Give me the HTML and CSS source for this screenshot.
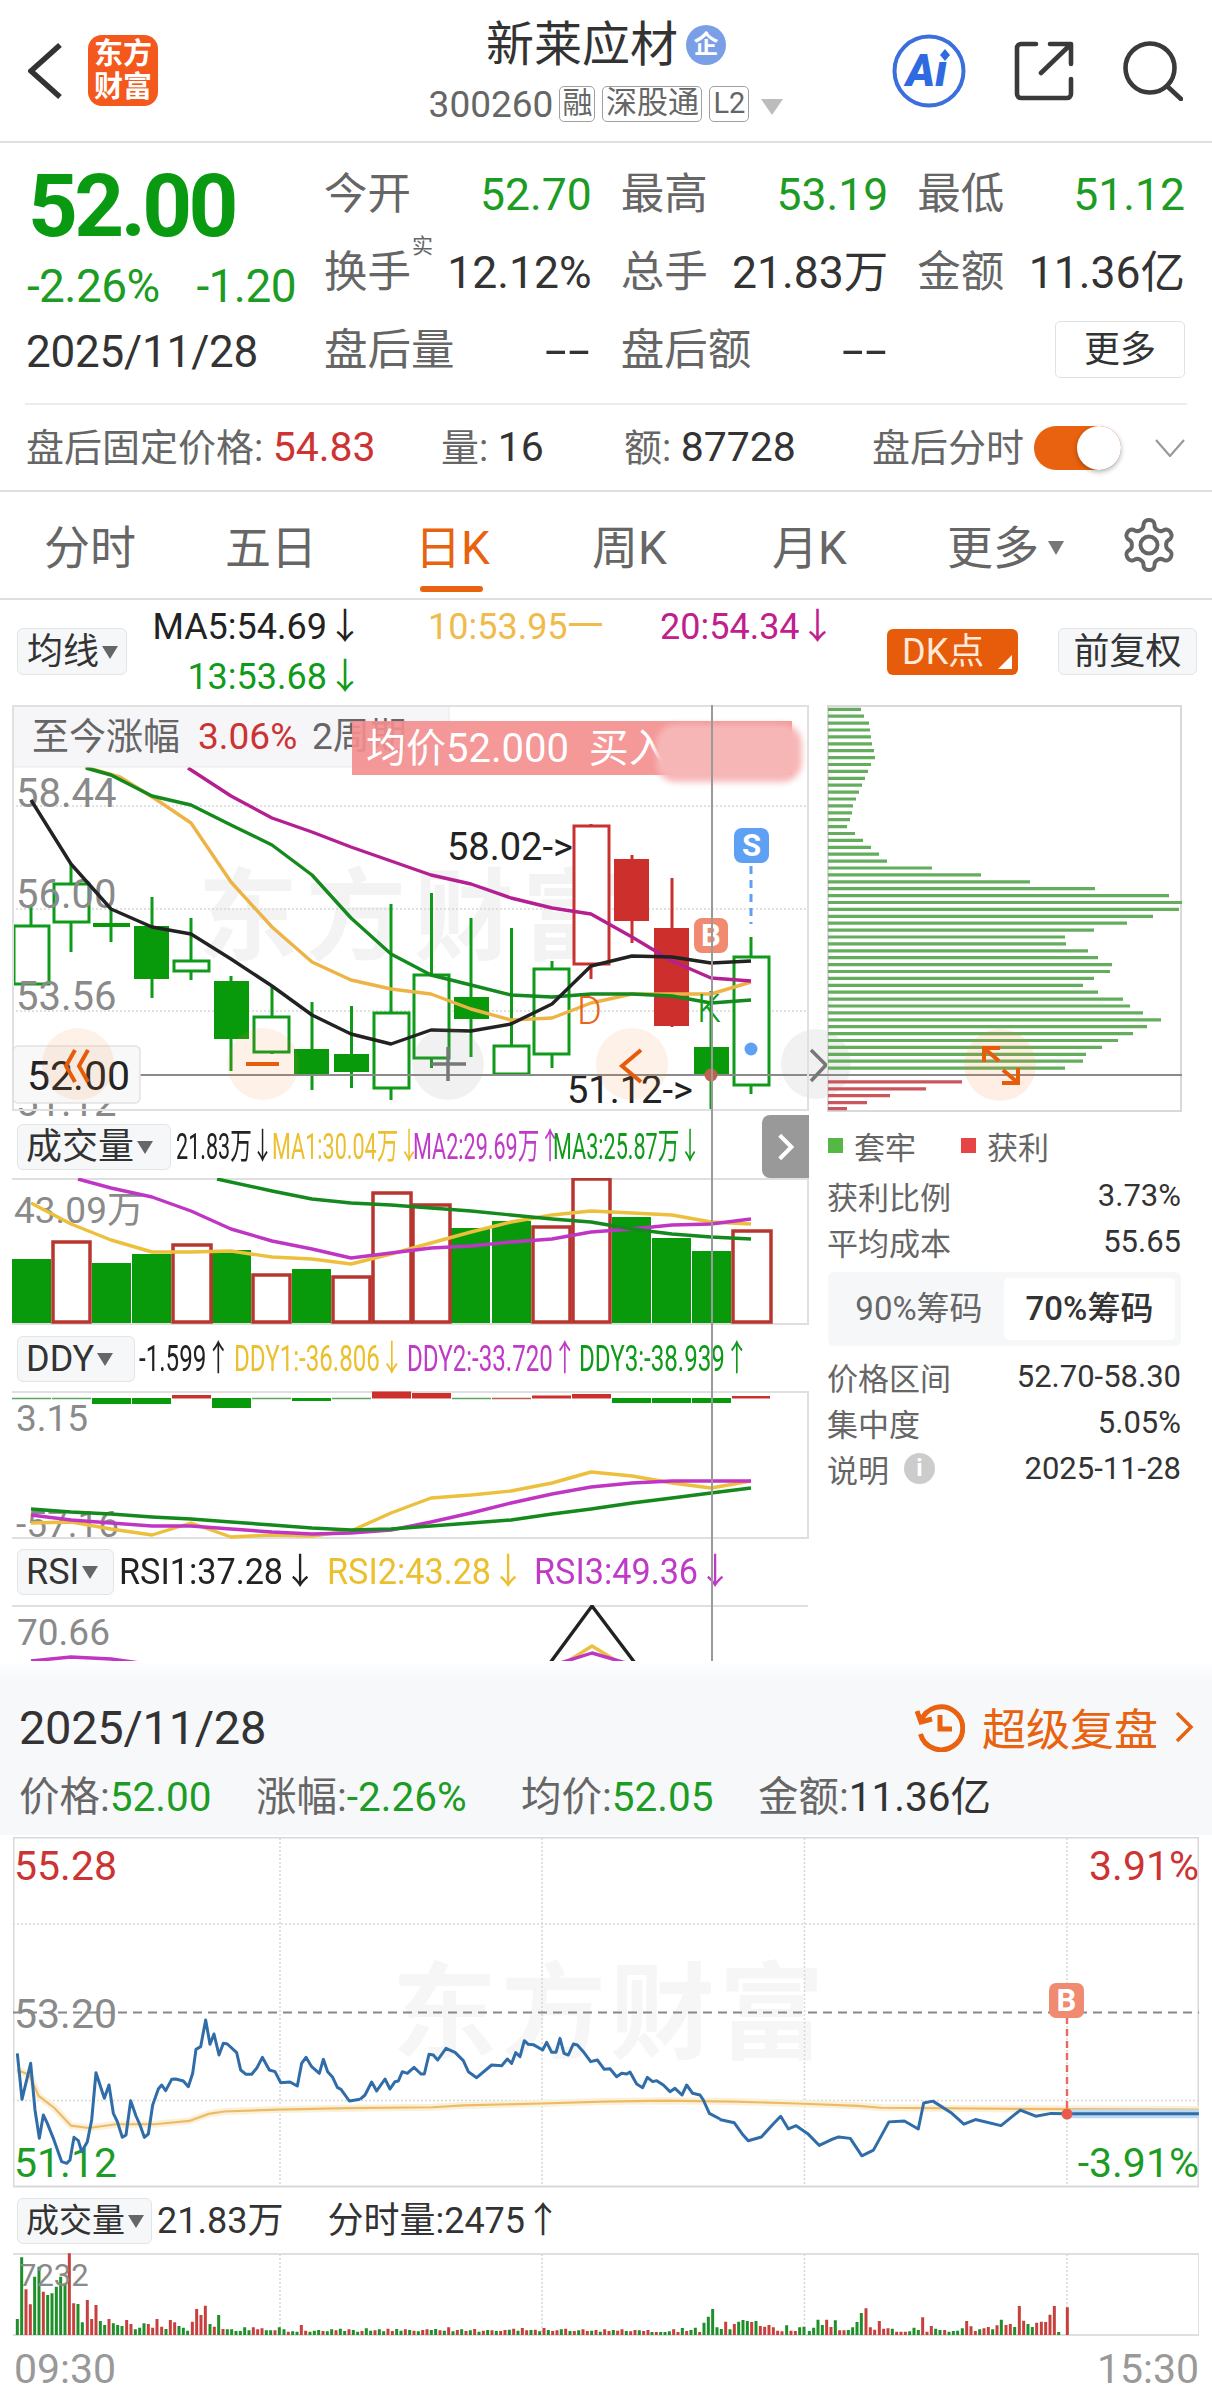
FILE: index.html
```html
<!DOCTYPE html>
<html lang="zh-CN">
<head>
<meta charset="utf-8">
<title>新莱应材</title>
<link rel="stylesheet" href="styles.css">
</head>
<body>
<div class="page">

<header class="top">
  <div class="top-left">
    <svg class="back" viewBox="0 0 34 58"><path d="M32 3 3 29l29 26"/></svg>
    <div class="logo"><span>东方</span><span>财富</span></div>
  </div>
  <div class="top-mid">
    <div class="title-row"><h1 class="title">新莱应材</h1><span class="badge-qi">企</span></div>
    <div class="code-row">
      <span class="code">300260</span>
      <span class="tag tag-rong">融</span>
      <span class="tag tag-sgt">深股通</span>
      <span class="tag tag-l2">L2</span>
      <span class="tri-down"></span>
    </div>
  </div>
  <div class="top-right">
    <svg class="ico-ai" viewBox="0 0 76 76">
      <circle cx="38" cy="38" r="34.5"/>
      <text class="ai-text" x="15" y="53">Aı</text>
      <path class="ai-star" d="M54 16l5 6-5 6-5-6z"/>
    </svg>
    <svg class="ico-line ico-share" viewBox="0 0 60 60"><path d="M22 3H7a4 4 0 0 0-4 4v46a4 4 0 0 0 4 4h46a4 4 0 0 0 4-4V38M36 3h21v20M56 4 27 32"/></svg>
    <svg class="ico-line ico-search" viewBox="0 0 60 60"><circle cx="27" cy="27" r="24.5"/><path d="m44 45 14 13"/></svg>
  </div>
</header>

<section class="quote">
  <div class="quote-main">
    <div class="price">52.00</div>
    <div class="change"><span>-2.26%</span><span>-1.20</span></div>
    <div class="qdate">2025/11/28</div>
  </div>
  <div class="stats">
    <div class="stat"><span class="lbl">今开</span><span class="val up">52.70</span></div>
    <div class="stat"><span class="lbl">最高</span><span class="val up">53.19</span></div>
    <div class="stat"><span class="lbl">最低</span><span class="val up">51.12</span></div>
    <div class="stat"><span class="lbl lbl-sup">换手<i class="sup">实</i></span><span class="val">12.12%</span></div>
    <div class="stat"><span class="lbl">总手</span><span class="val">21.83万</span></div>
    <div class="stat"><span class="lbl">金额</span><span class="val">11.36亿</span></div>
    <div class="stat"><span class="lbl">盘后量</span><span class="val val-dash">--</span></div>
    <div class="stat"><span class="lbl">盘后额</span><span class="val val-dash">--</span></div>
    <div class="stat stat-end"><button class="more-btn">更多</button></div>
  </div>
</section>

<section class="after">
  <div class="after-in">
    <div><span class="muted">盘后固定价格:</span> <span class="num red">54.83</span></div>
    <div><span class="muted">量:</span> <span class="num">16</span></div>
    <div><span class="muted">额:</span> <span class="num">87728</span></div>
    <div class="after-tog">
      <span class="muted">盘后分时</span>
      <span class="toggle"><span class="knob"></span></span>
      <svg class="after-chev" viewBox="0 0 30 18"><path d="M1 1l14 16L29 1"/></svg>
    </div>
  </div>
</section>

<nav class="tabs">
  <span class="tab">分时</span>
  <span class="tab">五日</span>
  <span class="tab tab-on">日K</span>
  <span class="tab">周K</span>
  <span class="tab">月K</span>
  <span class="tab">更多<i class="tab-tri"></i></span>
  <svg class="gear" viewBox="0 0 24 24"><path d="M12.22 2h-.44a2 2 0 0 0-2 2v.18a2 2 0 0 1-1 1.73l-.43.25a2 2 0 0 1-2 0l-.15-.08a2 2 0 0 0-2.73.73l-.22.38a2 2 0 0 0 .73 2.73l.15.1a2 2 0 0 1 1 1.72v.51a2 2 0 0 1-1 1.74l-.15.09a2 2 0 0 0-.73 2.73l.22.38a2 2 0 0 0 2.73.73l.15-.08a2 2 0 0 1 2 0l.43.25a2 2 0 0 1 1 1.73V20a2 2 0 0 0 2 2h.44a2 2 0 0 0 2-2v-.18a2 2 0 0 1 1-1.73l.43-.25a2 2 0 0 1 2 0l.15.08a2 2 0 0 0 2.73-.73l.22-.39a2 2 0 0 0-.73-2.73l-.15-.08a2 2 0 0 1-1-1.74v-.5a2 2 0 0 1 1-1.74l.15-.09a2 2 0 0 0 .73-2.73l-.22-.38a2 2 0 0 0-2.73-.73l-.15.08a2 2 0 0 1-2 0l-.43-.25a2 2 0 0 1-1-1.73V4a2 2 0 0 0-2-2z"/><circle cx="12" cy="12" r="3.4"/></svg>
</nav>

<section class="kline">
  <div class="ma-row">
    <button class="chip chip-ma">均线<i class="chip-tri"></i></button>
    <div class="ma-labels">
      <span class="ma-a c-dark">MA5:54.69↓</span>
      <span class="c-org">10:53.95一</span>
      <span class="c-mag">20:54.34↓</span>
      <span class="ma-a c-grn">13:53.68↓</span>
    </div>
    <button class="dk-btn">DK点<i class="dk-corner"></i></button>
    <button class="chip chip-fq">前复权</button>
  </div>

  <div class="kbody">
    <div class="kleft">
      <svg class="ch ch-main" viewBox="12 705 797 406">
        <text class="wm" x="198" y="952">东方财富</text>
        <path class="dots" d="M12 806H808M12 909H808M12 1011H808"/>
        <path class="wick-g" d="M31 905V926M71 864V952M111 909V942M152 897V998M191 918V980M231 976V1071M272 986V1054M312 1002V1090M351.5 1006V1088M391 904V1100M431.5 893V1068M471 918V1057M511.5 928V1075M552 961V1068M711 991V1111M751 937V1094"/>
        <path class="wick-r" d="M591 824V979M632 855V943M672 878V1027"/>
        <g class="body-g">
          <rect x="14" y="926" width="35" height="58"/>
          <rect x="54" y="884" width="35" height="38"/>
          <rect x="174" y="961" width="35" height="10"/>
          <rect x="254" y="1017" width="35" height="35"/>
          <rect x="374" y="1013" width="35" height="75"/>
          <rect x="414" y="975" width="35" height="83"/>
          <rect x="494" y="1046" width="35" height="28"/>
          <rect x="534" y="969" width="35" height="85"/>
          <rect x="734" y="957" width="35" height="128"/>
        </g>
        <g class="fill-g">
          <rect x="93" y="923" width="37" height="4"/>
          <rect x="134" y="926" width="35" height="53"/>
          <rect x="214" y="981" width="35" height="58"/>
          <rect x="294" y="1049" width="35" height="26"/>
          <rect x="334" y="1054" width="35" height="18"/>
          <rect x="454" y="997" width="35" height="22"/>
          <rect x="694" y="1047" width="35" height="29"/>
        </g>
        <rect class="body-r" x="574" y="826" width="35" height="138"/>
        <g class="fill-r">
          <rect x="614" y="859" width="35" height="62"/>
          <rect x="654" y="928" width="35" height="98"/>
        </g>
        <text class="ax" x="16" y="807">58.44</text>
        <text class="ax" x="16" y="908">56.00</text>
        <text class="ax" x="16" y="1010">53.56</text>
        <text class="ax" x="16" y="1116">51.12</text>
        <polyline class="ln l-org" points="85,767 120,777 157,800 191,823 231,882 272,927 312,962 351,980 391,989 431,994 471,1009 511,1020 552,1018 591,1003 632,994 672,994 711,994 751,982"/>
        <polyline class="ln l-grn" points="86,768 111,775 152,796 191,805 231,825 272,845 312,875 351,918 391,954 431,975 471,985 511,995 552,997 591,994 632,994 672,996 711,1003 751,1000"/>
        <polyline class="ln l-mag" points="188,768 231,796 272,818 312,832 351,847 391,861 431,875 471,884 511,898 552,908 591,914 632,937 672,961 711,978 751,981"/>
        <polyline class="ln l-blk" points="31,800 71,864 111,909 152,927 191,934 231,959 272,986 312,1015 351,1034 391,1044 431,1030 471,1031 511,1024 552,1004 591,966 632,956 672,957 711,963 751,961"/>
        <text class="lt lt-d" x="577" y="1024">D</text>
        <text class="lt lt-k" x="697" y="1022">K</text>
        <text class="tx" x="447" y="860">58.02-&gt;</text>
        <text class="tx" x="567" y="1103">51.12-&gt;</text>
        <path class="dash-b" d="M751 866V924"/>
        <circle class="dot-b" cx="751" cy="1049" r="6.5"/>
        <rect class="mk-b" x="694" y="918" width="34" height="35" rx="8"/>
        <text class="mk-t" x="711" y="946">B</text>
        <rect class="mk-s" x="734" y="828" width="35" height="35" rx="8"/>
        <text class="mk-t" x="751.5" y="856">S</text>
        <rect class="top-box" x="13" y="706" width="436" height="61"/>
        <text class="tb" x="32" y="750">至今涨幅</text>
        <text class="tb tb-red" x="198" y="749">3.06%</text>
        <text class="tb" x="312" y="749">2周期</text>
        <rect class="band" x="352" y="721" width="440" height="54"/>
        <text class="band-t" x="366" y="762">均价52.000  买入</text>
        <rect class="patch" x="656" y="724" width="146" height="58" rx="20"/>
        <line class="cross" x1="140" y1="1075" x2="827" y2="1075"/>
        <rect class="price-box" x="13" y="1046" width="127" height="57" rx="5"/>
        <text class="tx tx-p" x="27" y="1090">52.00</text>
        <circle class="rnd-o" cx="78" cy="1064" r="36"/>
        <circle class="rnd-o" cx="263" cy="1064" r="36"/>
        <circle class="rnd-g" cx="448" cy="1064" r="36"/>
        <circle class="rnd-o" cx="632" cy="1064" r="36"/>
        <circle class="rnd-g" cx="816" cy="1064" r="35"/>
        <path class="act-o" d="M75 1050 66 1066 75 1082M88 1050 79 1066 88 1082M246 1064H279M641 1050 622 1066 641 1082"/>
        <path class="act-g" d="M431 1064H466M448 1047V1081M811 1050 826 1065 811 1081"/>
        <circle class="dot-r" cx="711" cy="1075" r="6.5"/>
      </svg>

      <div class="ind ind-vol">
        <button class="chip chip-ind chip-vol">成交量<i class="chip-tri"></i></button>
        <div class="ind-labels">
          <span class="sq sq-v1 c-dark">21.83万↓</span>
          <span class="sq sq-v2 c-org2">MA1:30.04万↓</span>
          <span class="sq sq-v3 c-pur">MA2:29.69万↑</span>
          <span class="sq sq-v4 c-grn">MA3:25.87万↓</span>
        </div>
      </div>
      <svg class="ch ch-vol" viewBox="12 1178 797 147">
        <path class="frame" d="M12 1179H808V1324H12"/>
        <g class="fill-g">
          <rect x="12" y="1259" width="39" height="64"/>
          <rect x="92" y="1263" width="39" height="60"/>
          <rect x="132" y="1254" width="39" height="69"/>
          <rect x="212" y="1250" width="39" height="73"/>
          <rect x="292" y="1269" width="39" height="54"/>
          <rect x="451" y="1228" width="39" height="95"/>
          <rect x="492" y="1221" width="39" height="102"/>
          <rect x="612" y="1217" width="39" height="106"/>
          <rect x="652" y="1238" width="39" height="85"/>
          <rect x="692" y="1251" width="39" height="72"/>
        </g>
        <g class="vol-r">
          <rect x="53" y="1242" width="37" height="80"/>
          <rect x="173" y="1245" width="38" height="77"/>
          <rect x="253" y="1275" width="37" height="47"/>
          <rect x="333" y="1277" width="37" height="45"/>
          <rect x="373" y="1193" width="38" height="129"/>
          <rect x="413" y="1205" width="37" height="117"/>
          <rect x="533" y="1227" width="37" height="95"/>
          <rect x="573" y="1179" width="37" height="143"/>
          <rect x="733" y="1231" width="38" height="91"/>
        </g>
        <text class="ax ax-m" x="14" y="1223">43.09万</text>
        <polyline class="ln l-org2" points="31,1203 71,1224 111,1240 152,1252 191,1252 231,1251 272,1257 312,1259 351,1264 391,1254 431,1243 471,1232 511,1222 552,1215 591,1211 632,1213 672,1215 711,1222 751,1224"/>
        <polyline class="ln l-mag2" points="78,1179 111,1188 152,1197 191,1211 231,1229 272,1241 312,1249 351,1258 391,1253 431,1248 471,1246 511,1242 552,1239 591,1232 632,1229 672,1225 711,1224 751,1219"/>
        <polyline class="ln l-grn" points="217,1179 272,1191 312,1199 351,1203 391,1205 431,1208 471,1211 511,1215 552,1219 591,1222 632,1229 672,1234 711,1237 751,1239"/>
      </svg>

      <div class="ind ind-ddy">
        <button class="chip chip-ind chip-ddy">DDY<i class="chip-tri"></i></button>
        <div class="ind-labels">
          <span class="sq sq-d1 c-dark">-1.599↑</span>
          <span class="sq sq-d2 c-org2">DDY1:-36.806↓</span>
          <span class="sq sq-d3 c-pur">DDY2:-33.720↑</span>
          <span class="sq sq-d4 c-grn">DDY3:-38.939↑</span>
        </div>
      </div>
      <svg class="ch ch-ddy" viewBox="12 1391 797 148">
        <path class="frame" d="M12 1392H808V1538H12"/>
        <path class="thin-g" d="M12 1398.5H51M52 1398.5H91M252 1398.5H291M332 1398.5H371M452 1398.5H491"/>
        <path class="thin-r" d="M492 1398.5H531"/>
        <g class="fill-g">
          <rect x="92" y="1398" width="39" height="6"/>
          <rect x="132" y="1398" width="39" height="6"/>
          <rect x="212" y="1398" width="39" height="10"/>
          <rect x="292" y="1398" width="39" height="3"/>
          <rect x="612" y="1398" width="39" height="5"/>
          <rect x="652" y="1398" width="39" height="5"/>
          <rect x="692" y="1398" width="39" height="5"/>
        </g>
        <g class="fill-r">
          <rect x="172" y="1395" width="39" height="3.5"/>
          <rect x="372" y="1391.5" width="39" height="7"/>
          <rect x="412" y="1393" width="39" height="5.5"/>
          <rect x="532" y="1395.5" width="39" height="3"/>
          <rect x="572" y="1394" width="39" height="4.5"/>
          <rect x="732" y="1396" width="38" height="2.5"/>
        </g>
        <text class="ax ax-m" x="16" y="1431">3.15</text>
        <text class="ax ax-m" x="16" y="1537">-57.16</text>
        <polyline class="ln l-org2" points="31,1523 71,1522 111,1529 152,1535 191,1523 231,1537 272,1535 312,1536 351,1531 391,1513 431,1498 471,1495 511,1491 552,1483 591,1472 632,1476 672,1483 711,1488 751,1481"/>
        <polyline class="ln l-mag2" points="31,1515 71,1520 111,1523 152,1526 191,1526 231,1529 272,1532 312,1534 351,1533 391,1530 431,1522 471,1513 511,1503 552,1494 591,1487 632,1483 672,1481 711,1481 751,1481"/>
        <polyline class="ln l-grn" points="31,1509 71,1512 111,1514 152,1517 191,1519 231,1522 272,1525 312,1528 351,1530 391,1529 431,1526 471,1523 511,1520 552,1514 591,1509 632,1503 672,1498 711,1493 751,1488"/>
      </svg>

      <div class="ind ind-rsi">
        <button class="chip chip-ind chip-rsi">RSI<i class="chip-tri"></i></button>
        <div class="ind-labels">
          <span class="sq sq-r1 c-dark">RSI1:37.28↓</span>
          <span class="sq sq-r2 c-org2">RSI2:43.28↓</span>
          <span class="sq sq-r3 c-pur">RSI3:49.36↓</span>
        </div>
      </div>
      <svg class="ch ch-rsi" viewBox="12 1604 797 57">
        <path class="frame" d="M12 1605H808"/>
        <text class="ax ax-m" x="17" y="1644">70.66</text>
        <text class="ax ax-m" x="774" y="1686">50</text>
        <polyline class="ln l-mag2" points="31,1660 71,1656 111,1658 140,1662"/>
        <polyline class="ln l-blk" points="550,1662 592,1605 635,1662"/>
        <polyline class="ln l-org2" points="565,1662 592,1645 620,1662"/>
        <polyline class="ln l-mag2" points="560,1662 592,1652 626,1662"/>
      </svg>
      <div class="vline"></div>
      <button class="side-btn"><svg viewBox="0 0 20 32"><path d="M3 3l13 13L3 29"/></svg></button>
    </div>

    <aside class="kright">
      <svg class="ch ch-chip" viewBox="827 705 355 407">
        <rect class="chip-frame" x="828" y="706" width="353" height="405"/>
        <path class="bar-g" d="M828 709.3h33M828 716.2h36M828 723.1h41M828 730h42M828 736.9h43M828 743.8h44M828 750.7h46M828 757.6h47M828 764.5h43M828 771.4h40M828 778.3h37M828 785.2h34M828 792.1h31M828 799h28M828 805.9h25M828 812.8h24M828 819.7h22M828 826.6h19M828 833.5h27M828 840.4h35M828 847.3h43M828 854.2h51M828 861.1h59M828 868h104M828 874.9h153M828 881.8h202M828 888.7h267M828 895.6h341M828 902.5h354M828 909.4h351M828 916.3h325M828 923.2h299M828 930.1h266M828 937h237M828 943.9h238M828 950.8h260M828 957.7h270M828 964.6h284M828 971.5h282M828 978.4h266M828 985.3h255M828 992.2h270M828 999.1h295M828 1006h302M828 1012.9h315M828 1019.8h333M828 1026.7h319M828 1033.6h305M828 1040.5h290M828 1047.4h274M828 1054.3h258M828 1061.2h255M828 1068.1h237"/>
        <path class="bar-r" d="M828 1081.9h134M828 1088.8h98M828 1095.7h62M828 1102.6h39M828 1108.7h19"/>
        <line class="cross" x1="827" y1="1075" x2="1182" y2="1075"/>
        <circle class="rnd-o2" cx="1000" cy="1065" r="36"/>
        <path class="act-o" d="M984 1062v-14h16M985 1049l14 12M1018 1068v15h-16M1017 1082l-14-12"/>
      </svg>
      <div class="legend">
        <span class="lg"><i class="sw sw-g"></i>套牢</span>
        <span class="lg lg-r"><i class="sw sw-r"></i>获利</span>
      </div>
      <div class="kv kv-1"><span>获利比例</span><b>3.73%</b></div>
      <div class="kv"><span>平均成本</span><b>55.65</b></div>
      <div class="seg">
        <span class="seg-i">90%筹码</span>
        <span class="seg-i seg-on">70%筹码</span>
      </div>
      <div class="kv"><span>价格区间</span><b>52.70-58.30</b></div>
      <div class="kv"><span>集中度</span><b>5.05%</b></div>
      <div class="kv"><span class="kv-i">说明<i class="info">i</i></span><b>2025-11-28</b></div>
    </aside>
  </div>
</section>

<div class="fade"></div>

<section class="replay">
  <div class="replay-top">
    <span class="replay-date">2025/11/28</span>
    <span class="replay-link">
      <svg class="clock" viewBox="0 0 50 50"><path d="M6 19A21.5 21.5 0 1 1 5.5 32M2 9l4 11 11-3M25 13v14h12"/></svg>
      超级复盘
      <svg class="rchev" viewBox="0 0 20 34"><path d="M3 3l14 14L3 31"/></svg>
    </span>
  </div>
  <div class="replay-kv">
    <span><em>价格:</em><b class="up">52.00</b></span>
    <span><em>涨幅:</em><b class="up">-2.26%</b></span>
    <span><em>均价:</em><b class="up">52.05</b></span>
    <span><em>金额:</em><b>11.36亿</b></span>
  </div>
</section>

<svg class="ch ch-day" viewBox="13 1837 1186 351">
  <rect class="chip-frame" x="13.5" y="1837.5" width="1185" height="349"/>
  <text class="wm wm2" x="392" y="2050">东方财富</text>
  <path class="dots" d="M280 1838V2186M542 1838V2186M804.5 1838V2186M1067 1838V2186M13 1924H1199M13 2100.5H1199"/>
  <path class="dash-k" d="M13 2012.5H1199"/>
  <text class="ay ay-r" x="14" y="1880">55.28</text>
  <text class="ay ay-r ay-e" x="1199" y="1880">3.91%</text>
  <text class="ay" x="14" y="2028">53.20</text>
  <text class="ay ay-g" x="14" y="2177">51.12</text>
  <text class="ay ay-g ay-e" x="1199" y="2177">-3.91%</text>
  <g transform="translate(0 1660) scale(.77296 .47130)">
    <polyline class="ns avg-halo" points="22,870 38,880 50,925 70,950 92,988 115,993 150,985 200,985 245,978 270,963 290,958 360,954 450,951 560,949 600,945 700,941 780,937 860,935 950,937 1030,941 1110,946 1140,950 1280,952 1551,954"/>
    <polyline class="ns avg" points="22,870 38,880 50,925 70,950 92,988 115,993 150,985 200,985 245,978 270,963 290,958 360,954 450,951 560,949 600,945 700,941 780,937 860,935 950,937 1030,941 1110,946 1140,950 1280,952 1551,954"/>
    <polyline class="ns flat-halo" points="1381,963 1551,963"/>
  </g>
  <g transform="translate(10 2010) scale(.33333)">
    <polyline class="ns pline" points="22,130 36,268 62,160 75,300 88,385 100,315 112,340 130,385 155,455 170,460 180,450 192,382 205,392 215,425 232,395 245,330 258,188 283,265 297,225 310,310 322,335 337,382 348,375 362,272 378,318 390,345 403,382 415,372 428,285 445,237 455,225 467,242 485,208 497,207 520,213 535,230 548,190 558,118 572,110 587,30 600,103 612,72 627,135 640,100 652,102 680,128 692,180 708,193 725,193 740,175 757,142 778,180 795,185 812,218 840,216 862,228 875,160 888,142 905,170 928,190 940,148 953,185 968,202 982,232 993,238 1018,273 1050,268"/>
  </g>
  <g transform="translate(360 2010) scale(.33333)">
    <polyline class="ns pline" points="0,268 15,255 35,216 50,243 75,207 90,237 105,215 115,213 127,185 142,190 162,172 183,192 193,192 207,133 220,135 233,150 258,115 285,127 310,152 325,185 350,203 395,165 425,167 442,147 455,160 467,128 480,140 493,92 505,103 520,104 548,120 560,97 575,127 588,127 600,85 612,130 625,135 640,102 652,105 670,125 692,155 712,150 733,178 750,176 770,200 785,190 800,192 810,186 830,222 848,233 862,202 878,215 890,212 910,225 930,245 945,235 966,255 980,225 998,250 1020,255 1030,270 1048,310 1080,327"/>
  </g>
  <g transform="translate(0 1660) scale(.77296 .47130)">
    <polyline class="ns pline" points="931,975 950,982 960,1005 968,1020 985,1012 1000,985 1010,968 1020,995 1030,988 1045,1005 1060,1030 1075,1018 1085,1012 1100,1015 1115,1052 1130,1040 1150,980 1170,978 1188,995 1195,940 1207,936 1230,960 1247,985 1262,975 1295,988 1320,955 1340,968 1360,962 1381,963 1551,963"/>
  </g>
  <path class="dash-r" d="M1067 2017V2114"/>
  <circle class="dot-r2" cx="1067" cy="2114" r="5.5"/>
  <rect class="mk-b2" x="1049" y="1983" width="35" height="35" rx="7"/>
  <text class="mk-t" x="1066.5" y="2011">B</text>
</svg>

<div class="ind ind-day">
  <button class="chip chip-ind chip-dv">成交量<i class="chip-tri"></i></button>
  <span class="dv-a">21.83万</span>
  <span class="dv-b">分时量:2475↑</span>
</div>

<svg class="ch ch-mini" viewBox="13 2253 1186 83">
  <path class="frame" d="M13 2254H1199V2335H13"/>
  <path class="dots" d="M280 2254V2335M542 2254V2335M804.5 2254V2335M1067 2254V2335"/>
  <g transform="translate(10 2250) scale(.33333)">
    <path class="mb-g" d="M22 255V207M35 255V22M74 255V80M87 255V50M113 255V135M126 255V130M139 255V110M152 255V80M165 255V100M204 255V162M217 255V217M271 255V213M284 255V225M310 255V220M323 255V225M336 255V228M376 255V238M389 255V233M402 255V220M468 255V237M507 255V228M520 255V233M533 255V242M600 255V222M626 255V195M652 255V238M665 255V238M678 255V243M691 255V243M704 255V232M717 255V241M769 255V241M782 255V241M808 255V232M822 255V238M848 255V244M861 255V245M900 255V245M913 255V242M926 255V240M952 255V244M965 255V238M991 255V236M1004 255V243M1030 255V240M1043 255V245M1069 255V235M1082 255V242M1108 255V238M1121 255V244M1160 255V237M1173 255V242M1199 255V240M1225 255V244M1264 255V240M1277 255V237M1303 255V242M1329 255V244M1355 255V238M1381 255V241M1407 255V245M1433 255V240M1459 255V243M1498 255V239M1524 255V242M1563 255V240M1589 255V244M1615 255V240M1654 255V238M1680 255V243M1706 255V241M1745 255V242M1771 255V245M1810 255V240M1849 255V243M1888 255V241"/>
    <path class="mb-r" d="M48 255V118M61 255V163M100 255V125M178 255V10M191 255V160M232 255V150M245 255V207M258 255V165M297 255V207M350 255V210M363 255V222M415 255V222M428 255V233M441 255V207M455 255V230M481 255V210M494 255V217M547 255V215M560 255V177M573 255V195M586 255V167M613 255V230M639 255V237M730 255V232M743 255V238M756 255V235M795 255V241M835 255V245M874 255V225M887 255V242M939 255V243M978 255V241M1017 255V238M1056 255V243M1095 255V241M1134 255V236M1147 255V243M1186 255V238M1212 255V242M1238 255V240M1251 255V238M1290 255V241M1316 255V232M1342 255V240M1368 255V243M1394 255V237M1420 255V242M1446 255V241M1472 255V243M1485 255V240M1511 255V236M1537 255V234M1550 255V241M1576 255V239M1602 255V234M1628 255V243M1641 255V241M1667 255V236M1693 255V243M1719 255V238M1732 255V243M1758 255V240M1784 255V238M1797 255V243M1823 255V242M1836 255V238M1862 255V244M1875 255V240M1901 255V243M1914 255V240"/>
  </g>
  <g transform="translate(650 2250) scale(.33333)">
    <path class="mb-g" d="M6 255V246M32 255V246M45 255V246M58 255V244M97 255V234M123 255V240M136 255V233M162 255V218M175 255V200M188 255V177M201 255V232M214 255V237M240 255V238M266 255V215M279 255V210M292 255V213M318 255V213M410 255V226M449 255V232M462 255V230M478 255V243M491 255V233M504 255V209M517 255V225M556 255V211M595 255V240M608 255V232M621 255V216M634 255V189M727 255V236M779 255V244M792 255V233M805 255V240M857 255V236M870 255V240M897 255V245M910 255V243M923 255V242M937 255V235M989 255V238M1028 255V238M1054 255V209M1094 255V231M1134 255V222M1147 255V231M1226 255V246"/>
    <path class="mb-r" d="M19 255V246M71 255V238M84 255V246M110 255V243M149 255V246M227 255V215M253 255V222M305 255V216M331 255V228M344 255V230M357 255V225M370 255V232M383 255V242M396 255V244M423 255V242M436 255V243M530 255V209M543 255V231M569 255V241M582 255V241M648 255V175M661 255V232M674 255V239M688 255V213M701 255V236M714 255V235M740 255V245M753 255V245M766 255V245M818 255V202M831 255V245M844 255V228M884 255V240M950 255V213M963 255V229M976 255V243M1002 255V235M1015 255V231M1041 255V226M1068 255V225M1081 255V222M1108 255V168M1121 255V212M1160 255V218M1174 255V215M1187 255V216M1200 255V194M1213 255V168M1252 255V172"/>
  </g>
  <text class="ax ax-s" x="19" y="2286">7232</text>
</svg>

<div class="times"><span>09:30</span><span>15:30</span></div>

</div>
</body>
</html>
```

FILE: styles.css
```css
* { box-sizing: border-box; }
html, body { margin: 0; padding: 0; background: #fff; }
body { font-family: Roboto, "Noto Sans CJK SC", sans-serif; color: #333; }
.page { width: 1212px; height: 2399px; overflow: hidden; position: relative; }
i, em { font-style: normal; }
button { font: inherit; color: inherit; padding: 0; cursor: default; }
.up { color: #1c9c24; }
.red { color: #cc3333; }
.muted { color: #666; }
.c-dark { color: #222; }
.c-org { color: #efbb4c; }
.c-org2 { color: #ecbf2f; }
.c-mag { color: #c0208c; }
.c-pur { color: #c03ac8; }
.c-grn { color: #0f9a1a; }

/* header */
.top { height: 143px; border-bottom: 2px solid #dfdfdf; display: grid; grid-template-columns: 1fr auto 1fr; }
.top-left { display: flex; align-items: center; padding: 0 0 0 28px; gap: 26px; height: 141px; }
.back { width: 34px; height: 58px; fill: none; stroke: #333; stroke-width: 5.5; }
.logo { width: 70px; height: 71px; background: #f4581d; border-radius: 14px; color: #fff; font-weight: 700; font-size: 29px; line-height: 33px; display: flex; flex-direction: column; align-items: center; justify-content: center; }
.logo span { white-space: nowrap; }
.top-mid { display: flex; flex-direction: column; align-items: center; padding-top: 13px; }
.title-row { display: flex; align-items: center; height: 64px; }
.title { margin: 0; font-size: 48px; font-weight: 400; color: #333; line-height: 60px; }
.badge-qi { width: 40px; height: 40px; margin-left: 8px; border-radius: 50%; background: #7a9fe6; color: #fff; font-size: 25px; font-weight: 700; text-align: center; line-height: 40px; }
.code-row { display: flex; align-items: center; gap: 7px; height: 36px; margin-top: 9px; font-size: 37px; color: #666; }
.code { letter-spacing: 0; margin-right: -1px; }
.tag { height: 36px; border: 1.5px solid #a0a0a0; border-radius: 5px; font-size: 30px; line-height: 32px; text-align: center; white-space: nowrap; color: #666; overflow: hidden; }
.tag-rong { width: 36px; }
.tag-sgt { width: 100px; font-size: 31px; }
.tag-l2 { width: 40px; font-size: 29px; }
.tri-down { width: 0; height: 0; margin-left: 5px; margin-top: 6px; border: 11px solid transparent; border-top: 16px solid #bcbcbc; border-bottom: 0; }
.top-right { display: flex; align-items: center; justify-content: flex-end; height: 141px; padding-right: 29px; }
.ico-ai { width: 76px; height: 76px; margin-right: 47px; fill: none; stroke: #3a6fdd; stroke-width: 4; }
.ai-text { fill: #2f6ae0; stroke: none; font-size: 44px; font-weight: 900; font-style: italic; }
.ai-star { fill: #2f6ae0; stroke: none; }
.ico-line { width: 60px; height: 60px; fill: none; stroke: #3a3a3a; stroke-width: 4.6; stroke-linecap: round; stroke-linejoin: round; }
.ico-share { margin-right: 49px; }

/* quote */
.quote { height: 260px; padding: 13px 27px 0 0; display: grid; grid-template-columns: 324px 1fr; }
.quote-main { padding-left: 27px; }
.price { font-size: 87px; font-weight: 700; letter-spacing: -3.6px; color: #0a9a12; line-height: 96px; height: 100px; padding-top: 2px; margin-left: 1px; }
.change { display: flex; gap: 37px; font-size: 46px; line-height: 54px; color: #1c9c24; height: 62px; padding-top: 3px; letter-spacing: -.6px; white-space: nowrap; }
.qdate { font-size: 44px; line-height: 56px; height: 56px; color: #333; letter-spacing: -.2px; margin-top: 6px; margin-left: -1px; }
.stats { display: grid; grid-template-columns: repeat(3, 1fr); grid-auto-rows: 78px; column-gap: 29px; }
.stat { display: flex; align-items: center; justify-content: space-between; font-size: 43.5px; line-height: 56px; }
.stat-end { justify-content: flex-end; }
.lbl { color: #666; position: relative; }
.lbl-sup { padding-right: 0; }
.sup { position: absolute; left: 88px; top: -14px; font-size: 21px; line-height: 30px; color: #666; }
.val { color: #333; white-space: nowrap; font-size: 44.5px; }
.val.up { color: #1c9c24; }
.val-dash { transform: scaleX(1.75); transform-origin: right center; letter-spacing: 1px; }
.more-btn { width: 130px; height: 57px; border: 1.5px solid #e2e2e2; border-radius: 5px; background: #fff; font-size: 36px; color: #333; margin-top: -3px; }

/* after hours */
.after { height: 89px; padding: 0 25px; border-bottom: 2px solid #dfdfdf; }
.after-in { height: 87px; border-top: 2px solid #ececec; padding-left: 1px; display: grid; grid-template-columns: 415px 183px 248px 1fr; align-items: center; font-size: 38px; line-height: 46px; color: #333; white-space: nowrap; }
.num { font-size: 41px; }
.after-tog { display: flex; align-items: center; }
.toggle { width: 87px; height: 44px; margin-left: 10px; border-radius: 22px; background: #e8620f; position: relative; display: block; }
.knob { position: absolute; right: 0; top: 0; width: 44px; height: 44px; border-radius: 50%; background: #fff; box-shadow: 0 2px 5px rgba(0,0,0,.3); }
.after-chev { width: 30px; height: 18px; margin-left: 34px; fill: none; stroke: #999; stroke-width: 2.2; }

/* tabs */
.tabs { height: 108px; border-bottom: 2px solid #dfdfdf; display: grid; grid-template-columns: 181px 190px 177px 180px 175px 173px 1fr; padding: 5px 0 0 44px; align-items: center; font-size: 46px; color: #666; }
.tab { position: relative; line-height: 60px; white-space: nowrap; }
.tab-on { color: #e8620f; }
.tab-on::after { content: ""; position: absolute; left: 5px; top: 68px; width: 63px; height: 6px; border-radius: 3px; background: #e8620f; }
.tab-tri { display: inline-block; width: 0; height: 0; margin: 0 0 6px 9px; border: 8px solid transparent; border-top: 14px solid #777; border-bottom: 0; vertical-align: middle; }
.gear { width: 60px; height: 60px; margin: -5px 0 0 -1px; fill: none; stroke: #666; stroke-width: 1.6; stroke-linejoin: round; }

/* kline */
.kline { height: 1061px; overflow: hidden; }
.ma-row { height: 105px; position: relative; display: grid; grid-template-columns: 134px 736px 171px 1fr; padding-left: 17px; }
.chip { background: #f6f7f9; border: 1.5px solid #e3e4e6; border-radius: 6px; color: #333; font-size: 36px; line-height: 44px; white-space: nowrap; }
.chip-ma { width: 110px; height: 47px; margin-top: 28px; text-align: left; padding-left: 9px; }
.chip-tri { display: inline-block; width: 0; height: 0; margin: 0 0 3px 3px; border: 8px solid transparent; border-top: 13px solid #666; border-bottom: 0; vertical-align: middle; }
.ma-labels { display: grid; grid-template-columns: 212px 167px 220px; grid-template-rows: 50px 50px; column-gap: 65px; font-size: 36px; line-height: 50px; padding-top: 2px; white-space: nowrap; }
.ma-a { text-align: right; }
.dk-btn { width: 131px; height: 46px; margin-top: 29px; border: 0; border-radius: 6px; background: #e65c0a; color: #ffe9d8; font-size: 36px; line-height: 46px; text-align: left; padding-left: 15px; position: relative; }
.dk-corner { position: absolute; right: 6px; bottom: 6px; width: 0; height: 0; border: 7px solid transparent; border-right-color: #fff; border-bottom-color: #fff; }
.chip-fq { width: 139px; height: 47px; margin-top: 28px; }

.kbody { display: grid; grid-template-columns: 809px 1fr; height: 956px; }
.kleft { position: relative; padding-left: 12px; width: 809px; }
.ch { display: block; font-family: Roboto, "Noto Sans CJK SC", sans-serif; }
.ch-main { width: 797px; height: 406px; overflow: visible; background: #fff; outline: 2px solid #e0e0e0; outline-offset: -2px; }
.ch-vol { width: 797px; height: 147px; }
.ch-ddy { width: 797px; height: 148px; }
.ch-rsi { width: 797px; height: 57px; }
.ch-chip { width: 355px; height: 407px; overflow: visible; }
.ch-day { width: 1186px; height: 351px; margin-left: 13px; }
.ch-mini { width: 1186px; height: 83px; margin-left: 13px; }

.wm { font-size: 100px; font-weight: 700; fill: #f3f3f3; letter-spacing: 8px; }
.wm2 { font-size: 105px; letter-spacing: 4px; fill: #f6f6f6; }
.dots { fill: none; stroke: #d8d8d8; stroke-width: 1.5; stroke-dasharray: 2 2; }
.ax { font-size: 40px; fill: #8a8a8a; }
.ax-m { font-size: 37px; }
.ax-s { font-size: 31px; }
.wick-g { fill: none; stroke: #0f9a1a; stroke-width: 3; }
.wick-r { fill: none; stroke: #c8322e; stroke-width: 3; }
.body-g rect { fill: #fff; stroke: #0f9a1a; stroke-width: 3; }
.fill-g rect { fill: #099a0c; }
.body-r { fill: #fff; stroke: #c8322e; stroke-width: 3; }
.fill-r rect { fill: #cc2f2c; }
.ln { fill: none; stroke-width: 3.4; stroke-linejoin: round; }
.l-blk { stroke: #222; }
.l-org { stroke: #eeb346; }
.l-grn { stroke: #14891e; }
.l-mag { stroke: #b41f92; }
.l-org2 { stroke: #ecbf3c; }
.l-mag2 { stroke: #c036c4; }
.lt { font-size: 38px; font-weight: 300; }
.lt-d { fill: #e8641a; }
.lt-k { fill: #0f9a1a; }
.tx { font-size: 38px; fill: #222; }
.tx-p { font-size: 41px; }
.dash-b { stroke: #5ea1f4; stroke-width: 3; stroke-dasharray: 8 6; fill: none; }
.dot-b { fill: #5ea1f4; }
.dot-r { fill: #c0604f; }
.mk-b { fill: #f08a70; }
.mk-s { fill: #5ea1f4; }
.mk-t { font-size: 31px; font-weight: 700; fill: #fff; text-anchor: middle; }
.top-box { fill: #f6f6f8; stroke: #e9e9ec; stroke-width: 1; }
.tb { font-size: 37px; fill: #666; }
.tb-red { fill: #cc3333; }
.band { fill: #f38d8d; opacity: .9; }
.band-t { font-size: 40px; fill: #fff; white-space: pre; }
.patch { fill: #f7b6b6; filter: blur(3px); }
.cross { stroke: #8a8a8a; stroke-width: 2; }
.price-box { fill: #f8f8f8; stroke: #e2e2e2; stroke-width: 1.5; }
.rnd-o { fill: #f57c32; opacity: .11; }
.rnd-o2 { fill: #f57c32; opacity: .13; }
.rnd-g { fill: #888; opacity: .12; }
.act-o { fill: none; stroke: #e65c0a; stroke-width: 4; }
.act-g { fill: none; stroke: #777; stroke-width: 3.5; }
.frame { fill: none; stroke: #dfdfdf; stroke-width: 2; }
.vol-r rect { fill: #fff; stroke: #b8362f; stroke-width: 3.5; }
.thin-g { stroke: #5fa565; stroke-width: 1.5; fill: none; }
.thin-r { stroke: #b8604f; stroke-width: 1.5; fill: none; }

.ind { display: flex; align-items: flex-start; position: relative; }
.ind-vol { height: 66px; padding: 12px 0 0 5px; margin-top: 1px; }
.ind-ddy { height: 66px; padding: 11px 0 0 5px; }
.ind-rsi { height: 66px; padding: 10px 0 0 5px; }
.chip-ind { height: 46px; line-height: 42px; text-align: left; padding-left: 8px; }
.chip-vol { width: 154px; }
.chip-ddy { width: 118px; }
.chip-rsi { width: 97px; }
.chip-dv { width: 135px; font-size: 33px; }
.ind-labels { position: relative; flex: 1; height: 46px; display: flex; }
.sq { display: block; font-size: 36px; line-height: 46px; white-space: nowrap; transform-origin: left center; flex: none; }
.sq-v1 { width: 96px; margin-left: 5px; transform: scaleX(.6); }
.sq-v2 { width: 141px; transform: scaleX(.6); }
.sq-v3 { width: 140px; transform: scaleX(.6); }
.sq-v4 { width: 132px; transform: scaleX(.6); }
.sq-d1 { width: 95px; margin-left: 4px; transform: scaleX(.67); }
.sq-d2 { width: 173px; transform: scaleX(.67); }
.sq-d3 { width: 172px; transform: scaleX(.67); }
.sq-d4 { width: 165px; transform: scaleX(.67); }
.sq-r1 { width: 208px; margin-left: 5px; transform: scaleX(.95); }
.sq-r2 { width: 207px; transform: scaleX(.95); }
.sq-r3 { width: 190px; transform: scaleX(.95); }
.vline { position: absolute; left: 711px; top: 0; width: 2px; height: 956px; background: #9a9a9a; }
.side-btn { position: absolute; left: 762px; top: 410px; width: 47px; height: 63px; border: 0; background: #999; border-radius: 8px 0 0 8px; display: flex; align-items: center; justify-content: center; }
.side-btn svg { width: 18px; height: 30px; fill: none; stroke: #fff; stroke-width: 4.5; }

/* chips */
.kright { padding-left: 18px; width: 403px; position: relative; }
.chip-frame { fill: none; stroke: #d9d9d9; stroke-width: 2; }
.bar-g { fill: none; stroke: #64ad5c; stroke-width: 3.2; }
.bar-r { fill: none; stroke: #c9565c; stroke-width: 3.2; }
.legend { height: 54px; display: flex; align-items: center; padding: 12px 0 0 1px; font-size: 31px; color: #666; }
.lg { display: flex; align-items: center; width: 133px; }
.sw { width: 15px; height: 15px; margin-right: 11px; }
.sw-g { background: #55b844; }
.sw-r { background: #e54545; }
.kv { width: 354px; height: 46px; display: flex; align-items: center; justify-content: space-between; font-size: 31px; color: #666; }
.kv-1 { margin-top: 6px; }
.kv b { font-weight: 400; color: #333; }
.kv-i { display: flex; align-items: center; }
.info { width: 31px; height: 31px; margin-left: 15px; border-radius: 50%; background: #ccc; color: #fff; font-size: 24px; font-weight: 700; text-align: center; line-height: 31px; }
.seg { width: 353px; height: 74px; margin: 8px 0 7px 1px; padding: 6px; background: #f6f7f9; border-radius: 6px; display: grid; grid-template-columns: 170px 171px; font-size: 33px; align-items: center; text-align: center; color: #666; }
.seg-i { line-height: 62px; height: 62px; white-space: nowrap; }
.seg-on { background: #fff; border-radius: 5px; color: #333; font-weight: 500; }

/* replay */
.fade { height: 19px; background: linear-gradient(#fff, #f7f8fa); }
.replay { height: 155px; background: #f7f8fa; padding: 0 18px 0 19px; }
.replay-top { display: flex; justify-content: space-between; align-items: center; height: 60px; padding-top: 17px; box-sizing: content-box; }
.replay-date { font-size: 47px; color: #333; letter-spacing: -.3px; }
.replay-link { display: flex; align-items: center; font-size: 44px; color: #e8620f; }
.clock { width: 50px; height: 50px; margin-right: 17px; fill: none; stroke: #e8620f; stroke-width: 5; }
.rchev { width: 20px; height: 34px; margin-left: 16px; fill: none; stroke: #e8620f; stroke-width: 3.5; }
.replay-kv { display: grid; grid-template-columns: 237px 265px 237px 1fr; margin-top: 15px; font-size: 40.5px; line-height: 50px; white-space: nowrap; }
.replay-kv em { color: #666; }
.replay-kv b { font-weight: 400; color: #333; }
.replay-kv b.up { color: #1c9c24; }
.ch-day { margin-top: 2px; }
.dash-k { stroke: #888; stroke-width: 2; stroke-dasharray: 9 6; fill: none; }
.ay { font-size: 41px; fill: #8a8a8a; }
.ay-r { fill: #cc3333; }
.ay-g { fill: #1c9c24; }
.ay-e { text-anchor: end; }
.ns { fill: none; vector-effect: non-scaling-stroke; }
.avg { stroke: #edbb68; stroke-width: 2.2; }
.avg-halo { stroke: #fbf0d8; stroke-width: 7; }
.flat-halo { stroke: #bcd8f2; stroke-width: 9; }
.pline { stroke: #2f6ca8; stroke-width: 3; stroke-linejoin: round; }
.dash-r { stroke: #e86a5c; stroke-width: 2.4; stroke-dasharray: 7 5; fill: none; }
.dot-r2 { fill: #e85c50; }
.mk-b2 { fill: #f08a70; }
.ind-day { height: 65px; font-size: 36px; align-items: center; padding-left: 17px; color: #333; line-height: 46px; }
.dv-a { margin-left: 5px; }
.dv-b { margin-left: 44px; }
.mb-g { fill: none; stroke: #1f8f2a; stroke-width: 9; }
.mb-r { fill: none; stroke: #c8403d; stroke-width: 9; }
.times { display: flex; justify-content: space-between; padding: 10px 13px 0 14px; font-size: 41px; line-height: 46px; color: #999; }
```
